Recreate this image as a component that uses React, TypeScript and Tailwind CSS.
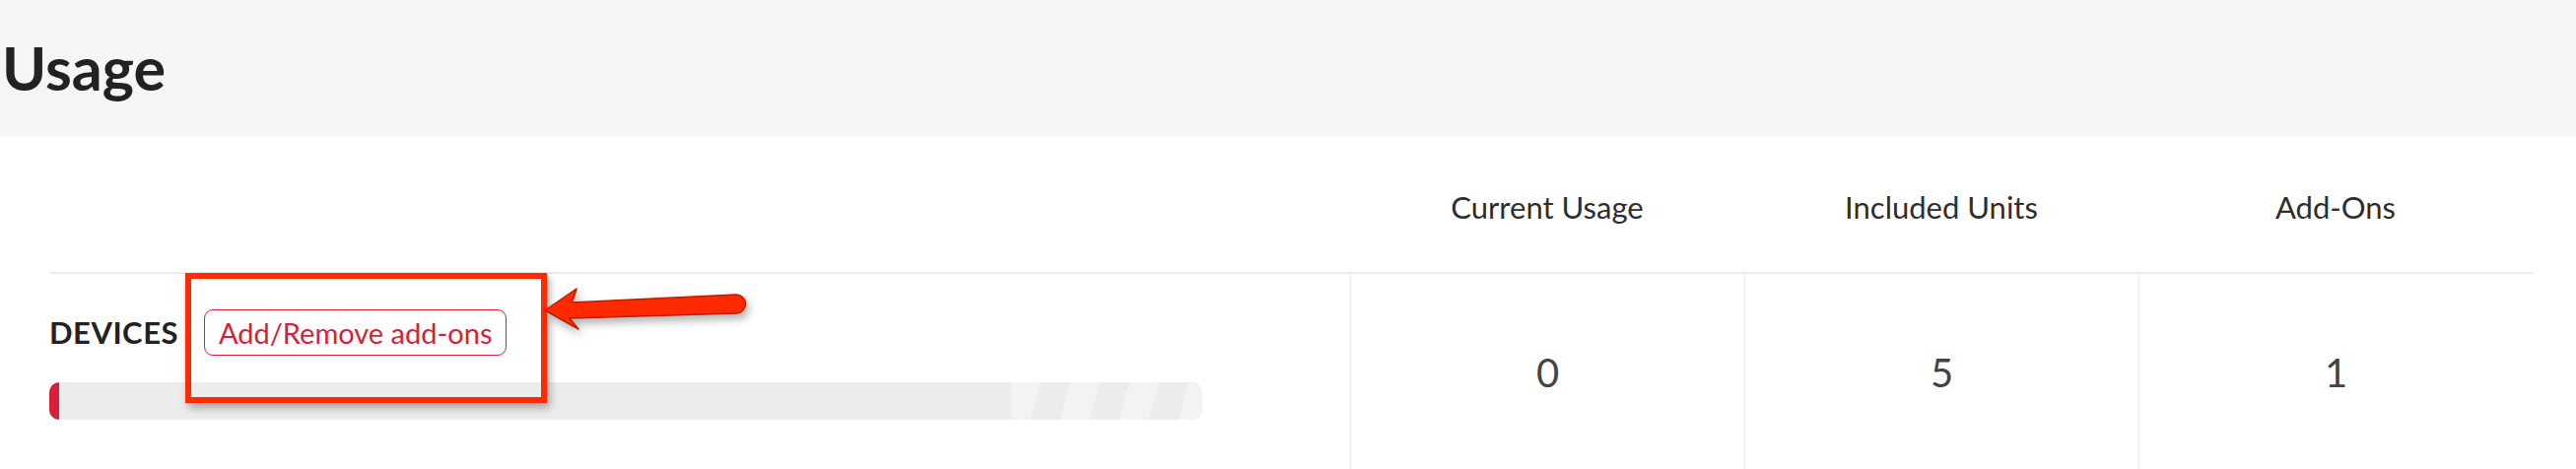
import React from 'react';

type Metric = { label: string; value: number };

const metrics: Metric[] = [
  { label: 'Current Usage', value: 0 },
  { label: 'Included Units', value: 5 },
  { label: 'Add-Ons', value: 1 },
];

export default function App() {
  return (
    <div className="relative w-[2614px] h-[476px] overflow-hidden bg-white font-['Lato',sans-serif]">
      <div className="h-[138px] bg-[#f5f5f5] flex items-center">
        <h1 className="pl-[2px] pb-[2px] text-[61px] font-bold text-[#222] leading-none">Usage</h1>
      </div>

      <div className="ml-[50px] w-[2520px]">
        <div className="flex h-[140px] border-b-2 border-[#ebebeb]">
          <div className="w-[1320px]" />
          {metrics.map((m) => (
            <div key={m.label} className="w-[400px] flex items-center justify-center pt-[6px] text-[31px] text-[#2e2e2e]">
              {m.label}
            </div>
          ))}
        </div>

        <div className="flex h-[200px]">
          <div className="w-[1320px] pt-[36px]">
            <div className="flex items-center gap-[26px]">
              <span className="text-[31px] font-bold text-[#222] tracking-[0.5px]">DEVICES</span>
              <button className="h-[47px] px-[14px] rounded-[9px] border-[1.5px] border-[#d71f3a] text-[29px] text-[#d71f3a] leading-none">
                Add/Remove add-ons
              </button>
            </div>
            <div className="mt-[27px] w-[1170px] h-[38px] rounded-[10px] bg-[#ececec] overflow-hidden flex">
              <div className="w-[10px] bg-[#d71f3a]" />
              <div className="flex-1" />
              <div className="w-[194px] bg-[repeating-linear-gradient(105deg,#f3f3f3_0px,#f3f3f3_29px,#ececec_29px,#ececec_58px)]" />
            </div>
          </div>
          {metrics.map((m) => (
            <div key={m.label} className="w-[400px] border-l border-[#ebebeb] flex items-center justify-center text-[40px] text-[#444]">
              {m.value}
            </div>
          ))}
        </div>
      </div>

      {/* annotation */}
      <div className="absolute left-[188px] top-[277px] w-[367px] h-[132px] border-[6px] border-[#ff2a00] shadow-[3px_5px_8px_rgba(0,0,0,0.3)]" />
      <svg
        className="absolute left-[540px] top-[280px] drop-shadow-[3px_5px_4px_rgba(0,0,0,0.3)]"
        width="230"
        height="70"
        viewBox="0 0 230 70"
      >
        <path
          d="M13 35 L45 13 Q43 21 40 27 L207 19 A9.5 9.5 0 0 1 207 38 L38 43 Q42 48 47 54 Z"
          fill="#ff2a00"
          stroke="#c21b00"
          strokeWidth="1.5"
          strokeLinejoin="round"
        />
      </svg>
    </div>
  );
}
